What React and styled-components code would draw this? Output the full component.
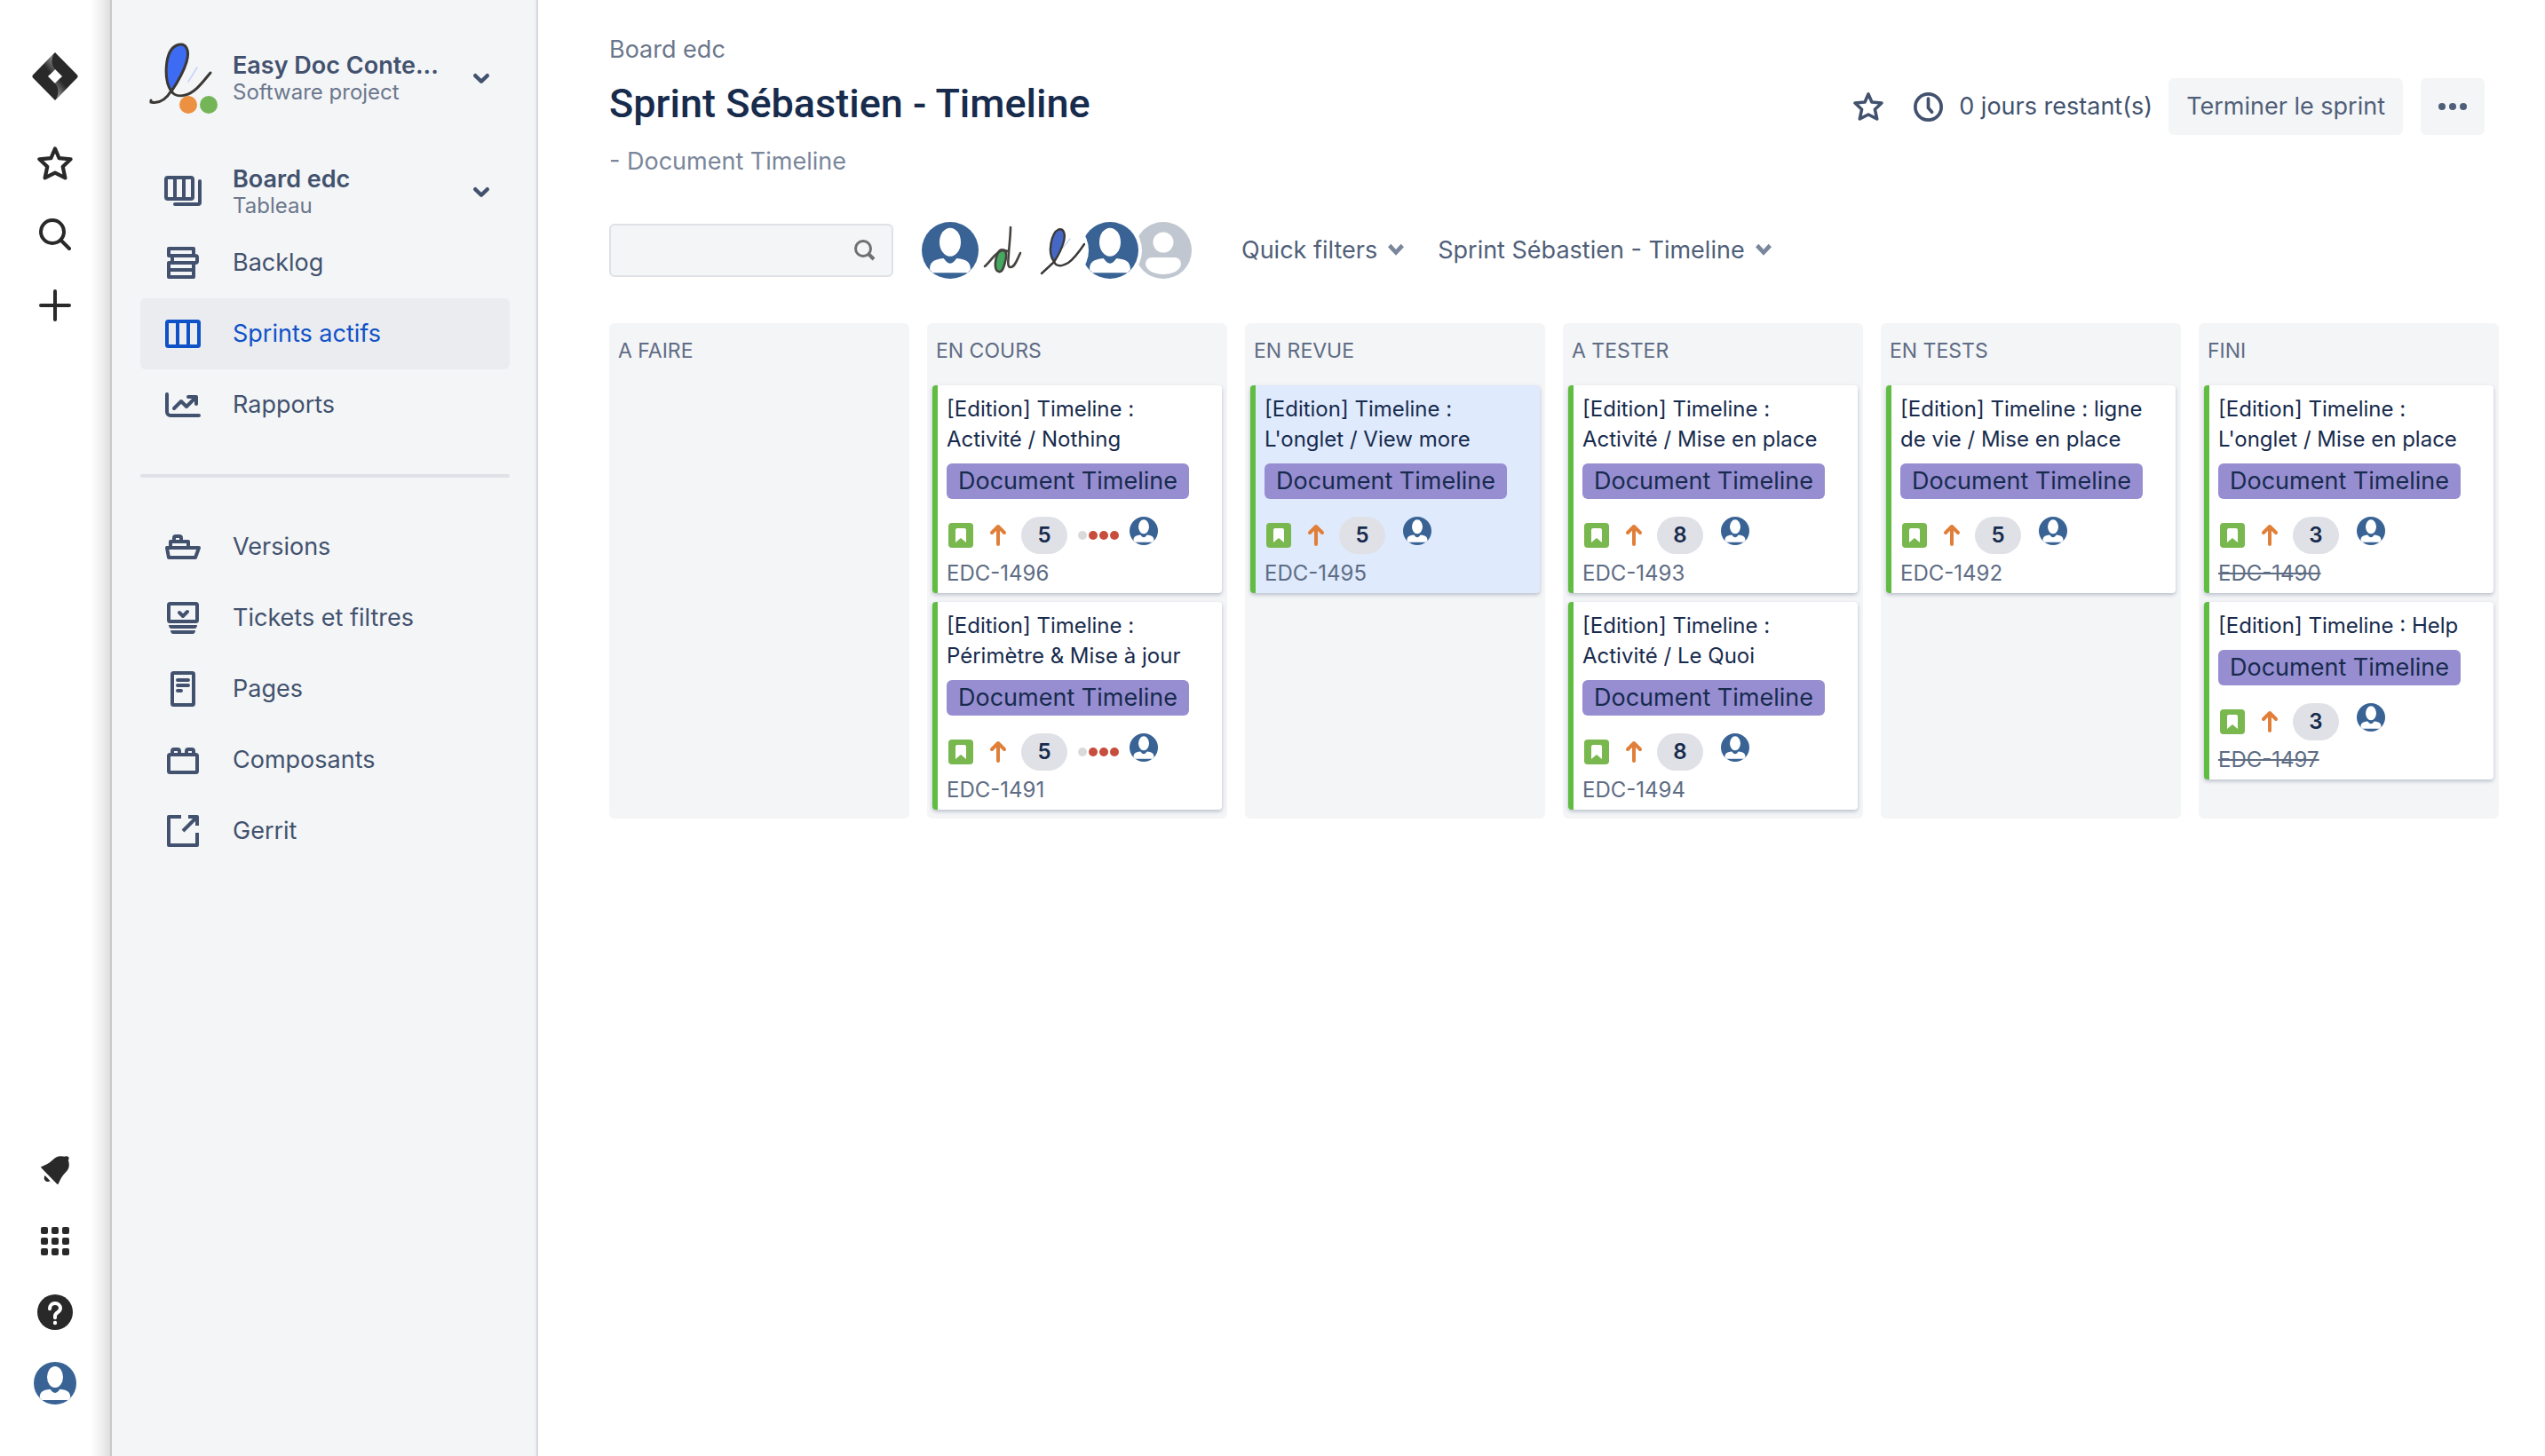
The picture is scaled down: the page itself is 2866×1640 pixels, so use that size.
import React from "react";
import styled, { createGlobalStyle } from "styled-components";

const GlobalStyle = createGlobalStyle`
  *, *::before, *::after { box-sizing: border-box; }
  body {
    margin: 0;
    background: #fff;
    color: #172b4d;
    font-family: Inter, "Liberation Sans", sans-serif;
    font-size: 27px;
    line-height: 40px;
  }
  button, input { font: inherit; color: inherit; }
  a { color: inherit; text-decoration: none; }
  h1, h2, p, ul { margin: 0; padding: 0; font-weight: 400; }
  svg { display: block; flex: none; }
`;

const Shell = styled.div`
  display: flex;
  min-height: 100vh;
`;

/* ---------- global rail ---------- */
const Rail = styled.nav`
  flex: none;
  display: flex;
  flex-direction: column;
  align-items: center;
  justify-content: space-between;
  width: 124px;
  padding: 46px 0 42px;
  background: linear-gradient(to left, #dedede 0, #f0f0f0 10px, #fff 22px);
`;

const RailGroup = styled.div`
  display: flex;
  flex-direction: column;
  align-items: center;
`;

const RailButton = styled.button`
  display: flex;
  align-items: center;
  justify-content: center;
  width: 80px;
  height: 80px;
  margin-bottom: ${(p) => (p.$brand ? 18 : 0)}px;
  padding: 0;
  border: 0;
  background: none;
  color: #292929;
`;

/* ---------- project sidebar ---------- */
const Sidebar = styled.aside`
  flex: none;
  width: 482px;
  padding: 48px 30px 0 32px;
  border-left: 2px solid #c9c9c9;
  border-right: 2px solid #d7d9dd;
  background: linear-gradient(to left, #ebecef 0, #f4f5f7 4px);
  color: #42526e;
`;

const ProjectSwitcher = styled.button`
  display: flex;
  align-items: center;
  gap: 16px;
  width: 100%;
  height: 80px;
  margin-bottom: 48px;
  padding: 0 22px 0 8px;
  border: 0;
  background: none;
  text-align: left;
`;

const NavItem = styled.a`
  display: flex;
  align-items: center;
  gap: 32px;
  height: 80px;
  padding: 0 22px 0 24px;
  border-radius: 6px;
  background: ${(p) => (p.$active ? "#ebecf0" : "transparent")};
  color: ${(p) => (p.$active ? "#0f52c8" : "#42526e")};
`;

const NavText = styled.span`
  flex: 1;
  display: flex;
  flex-direction: column;
  min-width: 0;
  white-space: nowrap;
`;

const NavTitle = styled.span`
  font-weight: ${(p) => (p.$strong ? 600 : 400)};
  line-height: 32px;
`;

const NavSub = styled.span`
  color: #6b778c;
  font-size: 24px;
  line-height: 28px;
`;

const Separator = styled.hr`
  height: 4px;
  margin: 38px 0;
  border: 0;
  border-radius: 2px;
  background: #dfe1e6;
`;

/* ---------- board page ---------- */
const Main = styled.main`
  flex: 1;
  min-width: 0;
  padding: 36px 52px 40px 80px;
`;

const Crumb = styled.a`
  display: block;
  color: #6b778c;
`;

const TitleRow = styled.header`
  display: flex;
  align-items: flex-start;
  justify-content: space-between;
  margin-top: 12px;
  padding-right: 16px;
`;

const Title = styled.h1`
  font-family: Roboto, Inter, sans-serif;
  font-size: 45px;
  font-weight: 500;
  line-height: 58px;
`;

const Actions = styled.div`
  display: flex;
  align-items: center;
  color: #42526e;
`;

const IconButton = styled.button`
  display: flex;
  padding: 0;
  margin-right: 34px;
  border: 0;
  background: none;
`;

const Remaining = styled.span`
  display: flex;
  align-items: center;
  gap: 18px;
  margin-right: 18px;
`;

const SoftButton = styled.button`
  display: flex;
  align-items: center;
  justify-content: center;
  height: 64px;
  padding: 0 20px;
  border: 0;
  border-radius: 6px;
  background: #f4f5f7;
  color: #505f79;

  & + & { margin-left: 20px; }
`;

const Goal = styled.p`
  margin-top: 10px;
  color: #7a869a;
`;

const Toolbar = styled.div`
  display: flex;
  align-items: center;
  margin-top: 48px;
`;

const SearchField = styled.label`
  display: flex;
  align-items: center;
  width: 320px;
  height: 60px;
  padding: 0 18px 0 12px;
  border: 2px solid #dfe1e6;
  border-radius: 6px;
  background: #f4f5f7;
  color: #707070;
`;

const SearchInput = styled.input`
  flex: 1;
  min-width: 0;
  border: 0;
  outline: 0;
  background: none;
`;

const AvatarStack = styled.div`
  display: flex;
  margin: 0 60px 0 32px;
`;

const AvatarButton = styled.button`
  position: relative;
  z-index: ${(p) => p.$level};
  width: 64px;
  height: 64px;
  margin-right: -4px;
  padding: 0;
  border: 0;
  border-radius: 50%;
  background: #fff;
  box-shadow: 0 0 0 4px #fff;
`;

const FilterButton = styled.button`
  display: flex;
  align-items: center;
  gap: 12px;
  margin-right: 38px;
  padding: 0;
  border: 0;
  background: none;
  color: #505f79;
`;

const Board = styled.div`
  display: grid;
  grid-template-columns: repeat(6, minmax(0, 1fr));
  gap: 20px;
  margin-top: 50px;
`;

const Column = styled.section`
  padding: 0 6px 10px;
  border-radius: 6px;
  background: #f4f5f7;
`;

const ColumnTitle = styled.h2`
  padding: 11px 4px 19px;
  color: #5e6c84;
  font-size: 23px;
`;

const CardList = styled.ul`
  display: flex;
  flex-direction: column;
  gap: 10px;
  list-style: none;
`;

const Card = styled.li`
  padding: 10px 12px 6px 10px;
  border-left: 6px solid #61bd42;
  border-radius: 4px;
  background: ${(p) => (p.$selected ? "#dfeafd" : "#fff")};
  box-shadow: 0 2px 4px rgba(9, 30, 66, 0.25);
`;

const Summary = styled.p`
  font-size: 24px;
  line-height: 34px;
`;

const Epic = styled.span`
  display: block;
  width: fit-content;
  margin: 10px 0 20px;
  padding: 0 13px;
  border-radius: 6px;
  background: #978ed2;
  white-space: nowrap;
`;

const Meta = styled.div`
  display: flex;
  align-items: center;
  height: 42px;
  padding-left: 2px;
`;

const Priority = styled.span`
  margin: 0 16px 0 18px;
`;

const Points = styled.span`
  width: 52px;
  border-radius: 21px;
  background: #dfe1e6;
  font-size: 24px;
  font-weight: 600;
  line-height: 42px;
  text-align: center;
`;

const Days = styled.span`
  display: flex;
  gap: 2px;
  margin-left: 12px;
`;

const Day = styled.i`
  width: 10px;
  height: 10px;
  border-radius: 50%;
  background: ${(p) => (p.$on ? "#c74d3c" : "#dadada")};
`;

const Assignee = styled.span`
  align-self: flex-start;
  margin-left: ${(p) => (p.$near ? 12 : 20)}px;
`;

const IssueKey = styled.a`
  display: block;
  width: fit-content;
  margin-top: 6px;
  color: #5e6c84;
  font-size: 24px;
  line-height: 32px;
  text-decoration: ${(p) => (p.$done ? "line-through" : "none")};
`;

/* ---------- drawings ---------- */
const Chevron = ({ width = 16, color = "currentColor" }) => (
  <svg width={width} height={width} viewBox="0 0 16 16" fill="none" stroke={color} strokeWidth="3.6" strokeLinecap="round" strokeLinejoin="round">
    <path d="M2.600 5.800 8 11l5.400-5.200" />
  </svg>
);

const SmallChevron = () => (
  <svg width="18" height="18" viewBox="0 0 16 16" fill="#7a869a">
    <path d="M0 4.600 3 1.600 8 7 13 1.600 16 4.600 8 13z" />
  </svg>
);

const JiraLogo = () => (
  <svg width="54" height="54" viewBox="0 0 54 54">
    <defs>
      <linearGradient id="jiraTop" x1="0.9" y1="0.1" x2="0.2" y2="0.9">
        <stop offset="0.1" stopColor="#8a8a8a" />
        <stop offset="0.75" stopColor="#292929" />
      </linearGradient>
      <linearGradient id="jiraBottom" x1="0.1" y1="0.9" x2="0.8" y2="0.1">
        <stop offset="0.1" stopColor="#8a8a8a" />
        <stop offset="0.75" stopColor="#292929" />
      </linearGradient>
    </defs>
    <path d="M27 0 51.6 25a2.8 2.8 0 0 1 0 4L27 54 2.4 29a2.8 2.8 0 0 1 0-4zM27 19l-8 8 8 8 8-8z" fill="#292929" fillRule="evenodd" />
    <path d="M27 19c-4.400-4.600-4.400-11.500-1.500-17L11 16.500l10 8.500z" fill="url(#jiraTop)" />
    <path d="M27 35c4.400 4.600 4.400 11.500 1.500 17L43 37.500 33 29z" fill="url(#jiraBottom)" />
  </svg>
);

const Star = ({ size = 40 }) => (
  <svg width={size} height={size} viewBox="0 0 40 40" fill="none" stroke="currentColor" strokeWidth="4.2" strokeLinejoin="round">
    <path d="M20 3.400 24.600 14.200 37.600 15.300 28.700 23.800 31.400 36.400 20 30.600 8.600 36.400 11.300 23.800 2.400 15.300 15.400 14.200z" />
  </svg>
);

const Magnifier = () => (
  <svg width="36" height="36" viewBox="0 0 36 36" fill="none" stroke="currentColor" strokeWidth="4" strokeLinecap="round">
    <circle cx="15" cy="15" r="13" />
    <path d="m25 25 9 9" />
  </svg>
);

const Plus = () => (
  <svg width="36" height="36" viewBox="0 0 36 36" stroke="currentColor" strokeWidth="4" strokeLinecap="round">
    <path d="M18 2v32M2 18h32" />
  </svg>
);

const Bell = () => (
  <svg width="32" height="32" viewBox="0 0 32 32" fill="currentColor">
    <path d="M.4 12.200C5 10.300 9 8.300 12.500 5.200 16.500 1 21 -1 27 .8 28 0 30 .2 31 1s.6 3-.1 4c1.700 5 1.200 9.500-3 13.500C24 22.500 21.500 27 19.700 31.600c-.3.500-1 .5-1.400.1L.3 13.300c-.3-.4-.3-.9.1-1.100z" />
    <path d="M4.600 22 10.600 28.200C8.500 29.600 6 29 4.600 27.400 3.400 26 3.400 23.700 4.600 22z" />
  </svg>
);

const Grid = () => (
  <svg width="32" height="32" viewBox="0 0 32 32" fill="currentColor">
    {[0, 12, 24].flatMap((y) => [0, 12, 24].map((x) => <rect key={`${x}-${y}`} x={x} y={y} width="8" height="8" rx="2" />))}
  </svg>
);

const Help = () => (
  <svg width="40" height="40" viewBox="0 0 40 40" fill="none">
    <circle cx="20" cy="20" r="20" fill="currentColor" />
    <path d="M14 16.200C14 12.300 16.500 10 20 10s6 2.400 6 5.600c0 5-6 4.200-6 8.600v2" stroke="#fff" strokeWidth="4" strokeLinecap="round" />
    <circle cx="20" cy="32" r="2.200" fill="#fff" />
  </svg>
);

const Person = ({ size }) => (
  <svg width={size} height={size} viewBox="0 0 48 48">
    <circle cx="24" cy="24" r="24" fill="#396395" />
    <ellipse cx="24" cy="17" rx="9" ry="12" fill="#fff" />
    <path d="M6.800 40.500c0-6 2.200-8.700 11.700-9.700 1.500 2.200 3.500 4.200 5.500 4.200s4-2 5.500-4.200c9.500 1 11.700 3.700 11.700 9.700L38.500 43h-29z" fill="#fff" />
  </svg>
);

const Unassigned = () => (
  <svg width="64" height="64" viewBox="0 0 64 64">
    <circle cx="32" cy="32" r="32" fill="#c1c7d0" />
    <circle cx="32" cy="23" r="11.500" fill="#fff" />
    <path d="M12 47a7 7 0 0 1 7-7h26a7 7 0 0 1 7 7c0 7-9 12-20 12s-20-5-20-12z" fill="#fff" />
  </svg>
);

const LetterD = () => (
  <svg width="64" height="64" viewBox="0 0 64 64" fill="none" stroke="#45423f" strokeWidth="2.600" strokeLinecap="round" strokeLinejoin="round">
    <path d="M29 31.500c6-1 7 4 5.500 11S31 57 27 56c-5-1-4.500-9-3.500-14s2.500-9 5.500-10.500z" fill="#45a860" />
    <path d="M11 50c4-3 7-8 11-12 4-4 8-8 15-5" />
    <path d="M40 6c0 9-1.500 20-2 29s-2 16 2 16c5 0 8-10 11-16" />
  </svg>
);

const LetterL = () => (
  <svg width="64" height="64" viewBox="0 0 64 64" fill="none" stroke="#3b3937" strokeWidth="2.400" strokeLinecap="round" strokeLinejoin="round">
    <path d="M39 29 47 19" stroke="#c9dcf5" strokeWidth="1.500" />
    <path d="M29 45C21 35 26 12 34 8.500c7-2 8 7 5.500 15C37 32 33 39 29 45z" fill="#4468c4" />
    <path d="M15 58 29 45c3 6 9 5 16 1 7-5 12-12 18-21" />
  </svg>
);

const ProjectLogo = () => (
  <svg width="80" height="80" viewBox="0 0 80 80" fill="none" stroke="#3b3835" strokeWidth="3" strokeLinecap="round">
    <path d="M46 44 56 28" stroke="#c5d3fb" strokeWidth="1.500" />
    <path d="M27 55C18 42 19 9 33 3 44-1 48 9 44 22 40 35 33 46 27 55z" fill="#3d6bf2" />
    <path d="M4 65v2c9 2 17-3 23-13 2 5 8 7 16 5 11-3 18-13 28-25" />
    <circle cx="46" cy="70" r="10" fill="#ec9142" stroke="none" />
    <circle cx="69" cy="70" r="10" fill="#74b657" stroke="none" />
  </svg>
);

const glyphs = {
  board: (
    <>
      <rect x="5" y="8" width="30" height="24" rx="2" />
      <path d="M15 8v24M25 8v24M43 12v24a2 2 0 0 1-2 2H15" />
    </>
  ),
  backlog: <path d="M8 16V8h28v8M8 16h28M8 24h28v16H8zM8 32h28M12 16v8M36 16h2a2 2 0 0 1 2 2v4a2 2 0 0 1-2 2h-2" />,
  sprints: (
    <>
      <rect x="6" y="10" width="36" height="28" rx="1.500" />
      <path d="M18 10v28M30 10v28" />
    </>
  ),
  reports: <path d="M6 12v20a4 4 0 0 0 4 4h32M14 28l8-8 6 6 10-10M30 15h9v8" />,
  versions: <path d="M6 25h36l-4 11H8zM10 25v-7h20v7M14 18v-4a2 2 0 0 1 2-2h4a2 2 0 0 1 2 2v4" />,
  issues: (
    <>
      <rect x="8" y="8" width="32" height="20" rx="1.500" />
      <path d="M20 18l4 4 5-5" />
      <path d="M8 32h32c0 2-1 4-3 4H11c-2 0-3-2-3-4zM10 38h28c0 2-1 4-3 4H13c-2 0-3-2-3-4z" fill="currentColor" stroke="none" />
    </>
  ),
  pages: (
    <>
      <rect x="12" y="6" width="24" height="36" rx="1.500" />
      <path d="M18 14h12M18 20h12M18 26h4" />
    </>
  ),
  components: (
    <>
      <rect x="8" y="18" width="32" height="20" rx="1.500" />
      <path d="M12 18v-4a2 2 0 0 1 2-2h4a2 2 0 0 1 2 2v4M28 18v-4a2 2 0 0 1 2-2h4a2 2 0 0 1 2 2v4" />
    </>
  ),
  external: <path strokeLinecap="butt" d="M22 8H8v32h32V26M24 24 39 9M30 8h10v10" />,
};

const NavIcon = ({ name }) => (
  <svg width="48" height="48" viewBox="0 0 48 48" fill="none" stroke="currentColor" strokeWidth="4" strokeLinecap="round" strokeLinejoin="round">
    {glyphs[name]}
  </svg>
);

const Clock = () => (
  <svg width="33" height="33" viewBox="0 0 32 32" fill="none" stroke="currentColor" strokeWidth="3.600" strokeLinecap="round" strokeLinejoin="round">
    <circle cx="16" cy="16" r="14.200" />
    <path d="M16 7v10l4 4.500" />
  </svg>
);

const Dots = () => (
  <svg width="32" height="8" viewBox="0 0 32 8" fill="currentColor">
    <circle cx="4" cy="4" r="4" />
    <circle cx="16" cy="4" r="4" />
    <circle cx="28" cy="4" r="4" />
  </svg>
);

const FieldMagnifier = () => (
  <svg width="24" height="24" viewBox="0 0 24 24" fill="none" stroke="currentColor">
    <circle cx="10" cy="10" r="8.500" strokeWidth="3" />
    <path d="m15.500 15.500 6.500 6.500" strokeWidth="4" />
  </svg>
);

const Story = () => (
  <svg width="28" height="28" viewBox="0 0 28 28">
    <rect width="28" height="28" rx="4" fill="#79b74f" />
    <path d="M8 8a2 2 0 0 1 2-2h8a2 2 0 0 1 2 2v14l-6-5-6 5z" fill="#fff" />
  </svg>
);

const ArrowUp = () => (
  <svg width="20" height="26" viewBox="0 0 20 26" fill="none" stroke="#e07f3a" strokeWidth="4" strokeLinecap="round" strokeLinejoin="round">
    <path d="M10 23V3M3 10l7-7 7 7" />
  </svg>
);

/* ---------- data ---------- */
const boardLinks = [
  { icon: "backlog", label: "Backlog" },
  { icon: "sprints", label: "Sprints actifs", active: true },
  { icon: "reports", label: "Rapports" },
];

const projectLinks = [
  { icon: "versions", label: "Versions" },
  { icon: "issues", label: "Tickets et filtres" },
  { icon: "pages", label: "Pages" },
  { icon: "components", label: "Composants" },
  { icon: "external", label: "Gerrit" },
];

const people = [
  { name: "Sébastien", art: <Person size={64} /> },
  { name: "Doc", art: <LetterD /> },
  { name: "Easy", art: <LetterL /> },
  { name: "Board", art: <Person size={64} /> },
  { name: "Non assigné", art: <Unassigned /> },
];

const columns = [
  { title: "A FAIRE", cards: [] },
  {
    title: "EN COURS",
    cards: [
      { id: "EDC-1496", lines: ["[Edition] Timeline :", "Activité / Nothing"], points: 5, days: true },
      { id: "EDC-1491", lines: ["[Edition] Timeline :", "Périmètre & Mise à jour"], points: 5, days: true },
    ],
  },
  { title: "EN REVUE", cards: [{ id: "EDC-1495", lines: ["[Edition] Timeline :", "L'onglet / View more"], points: 5, selected: true }] },
  {
    title: "A TESTER",
    cards: [
      { id: "EDC-1493", lines: ["[Edition] Timeline :", "Activité / Mise en place"], points: 8 },
      { id: "EDC-1494", lines: ["[Edition] Timeline :", "Activité / Le Quoi"], points: 8 },
    ],
  },
  { title: "EN TESTS", cards: [{ id: "EDC-1492", lines: ["[Edition] Timeline : ligne", "de vie / Mise en place"], points: 5 }] },
  {
    title: "FINI",
    cards: [
      { id: "EDC-1490", lines: ["[Edition] Timeline :", "L'onglet / Mise en place"], points: 3, done: true },
      { id: "EDC-1497", lines: ["[Edition] Timeline : Help"], points: 3, done: true },
    ],
  },
];

const NavLink = ({ icon, label, active }) => (
  <NavItem href="#" $active={active}>
    <NavIcon name={icon} />
    <NavTitle>{label}</NavTitle>
  </NavItem>
);

const IssueCard = ({ id, lines, points, days, selected, done }) => (
  <Card $selected={selected}>
    <Summary>
      {lines.map((line, i) => (
        <React.Fragment key={line}>
          {i > 0 && <br />}
          {line}
        </React.Fragment>
      ))}
    </Summary>
    <Epic>Document Timeline</Epic>
    <Meta>
      <Story />
      <Priority><ArrowUp /></Priority>
      <Points>{points}</Points>
      {days && (
        <Days>
          <Day />
          <Day $on />
          <Day $on />
          <Day $on />
        </Days>
      )}
      <Assignee $near={days}><Person size={32} /></Assignee>
    </Meta>
    <IssueKey href="#" $done={done}>{id}</IssueKey>
  </Card>
);

export default function App() {
  return (
    <Shell>
      <GlobalStyle />
      <Rail>
        <RailGroup>
          <RailButton $brand aria-label="Jira"><JiraLogo /></RailButton>
          <RailButton aria-label="Favoris"><Star /></RailButton>
          <RailButton aria-label="Rechercher"><Magnifier /></RailButton>
          <RailButton aria-label="Créer"><Plus /></RailButton>
        </RailGroup>
        <RailGroup>
          <RailButton aria-label="Notifications"><Bell /></RailButton>
          <RailButton aria-label="Applications"><Grid /></RailButton>
          <RailButton aria-label="Aide"><Help /></RailButton>
          <RailButton aria-label="Profil"><Person size={48} /></RailButton>
        </RailGroup>
      </Rail>

      <Sidebar>
        <ProjectSwitcher>
          <ProjectLogo />
          <NavText>
            <NavTitle $strong>Easy Doc Conte...</NavTitle>
            <NavSub>Software project</NavSub>
          </NavText>
          <Chevron width={20} />
        </ProjectSwitcher>
        <NavItem href="#">
          <NavIcon name="board" />
          <NavText>
            <NavTitle $strong>Board edc</NavTitle>
            <NavSub>Tableau</NavSub>
          </NavText>
          <Chevron width={20} />
        </NavItem>
        {boardLinks.map((link) => <NavLink key={link.label} {...link} />)}
        <Separator />
        {projectLinks.map((link) => <NavLink key={link.label} {...link} />)}
      </Sidebar>

      <Main>
        <Crumb href="#">Board edc</Crumb>
        <TitleRow>
          <Title>Sprint Sébastien - Timeline</Title>
          <Actions>
            <IconButton aria-label="Ajouter aux favoris"><Star size={34} /></IconButton>
            <Remaining><Clock />0 jours restant(s)</Remaining>
            <SoftButton>Terminer le sprint</SoftButton>
            <SoftButton aria-label="Plus d'actions"><Dots /></SoftButton>
          </Actions>
        </TitleRow>
        <Goal>- Document Timeline</Goal>

        <Toolbar>
          <SearchField>
            <SearchInput type="text" aria-label="Rechercher dans le tableau" />
            <FieldMagnifier />
          </SearchField>
          <AvatarStack>
            {people.map((person, i) => (
              <AvatarButton key={person.name} $level={people.length - i} aria-label={person.name}>{person.art}</AvatarButton>
            ))}
          </AvatarStack>
          <FilterButton>Quick filters<SmallChevron /></FilterButton>
          <FilterButton>Sprint Sébastien - Timeline<SmallChevron /></FilterButton>
        </Toolbar>

        <Board>
          {columns.map((column) => (
            <Column key={column.title}>
              <ColumnTitle>{column.title}</ColumnTitle>
              <CardList>
                {column.cards.map((card) => <IssueCard key={card.id} {...card} />)}
              </CardList>
            </Column>
          ))}
        </Board>
      </Main>
    </Shell>
  );
}
